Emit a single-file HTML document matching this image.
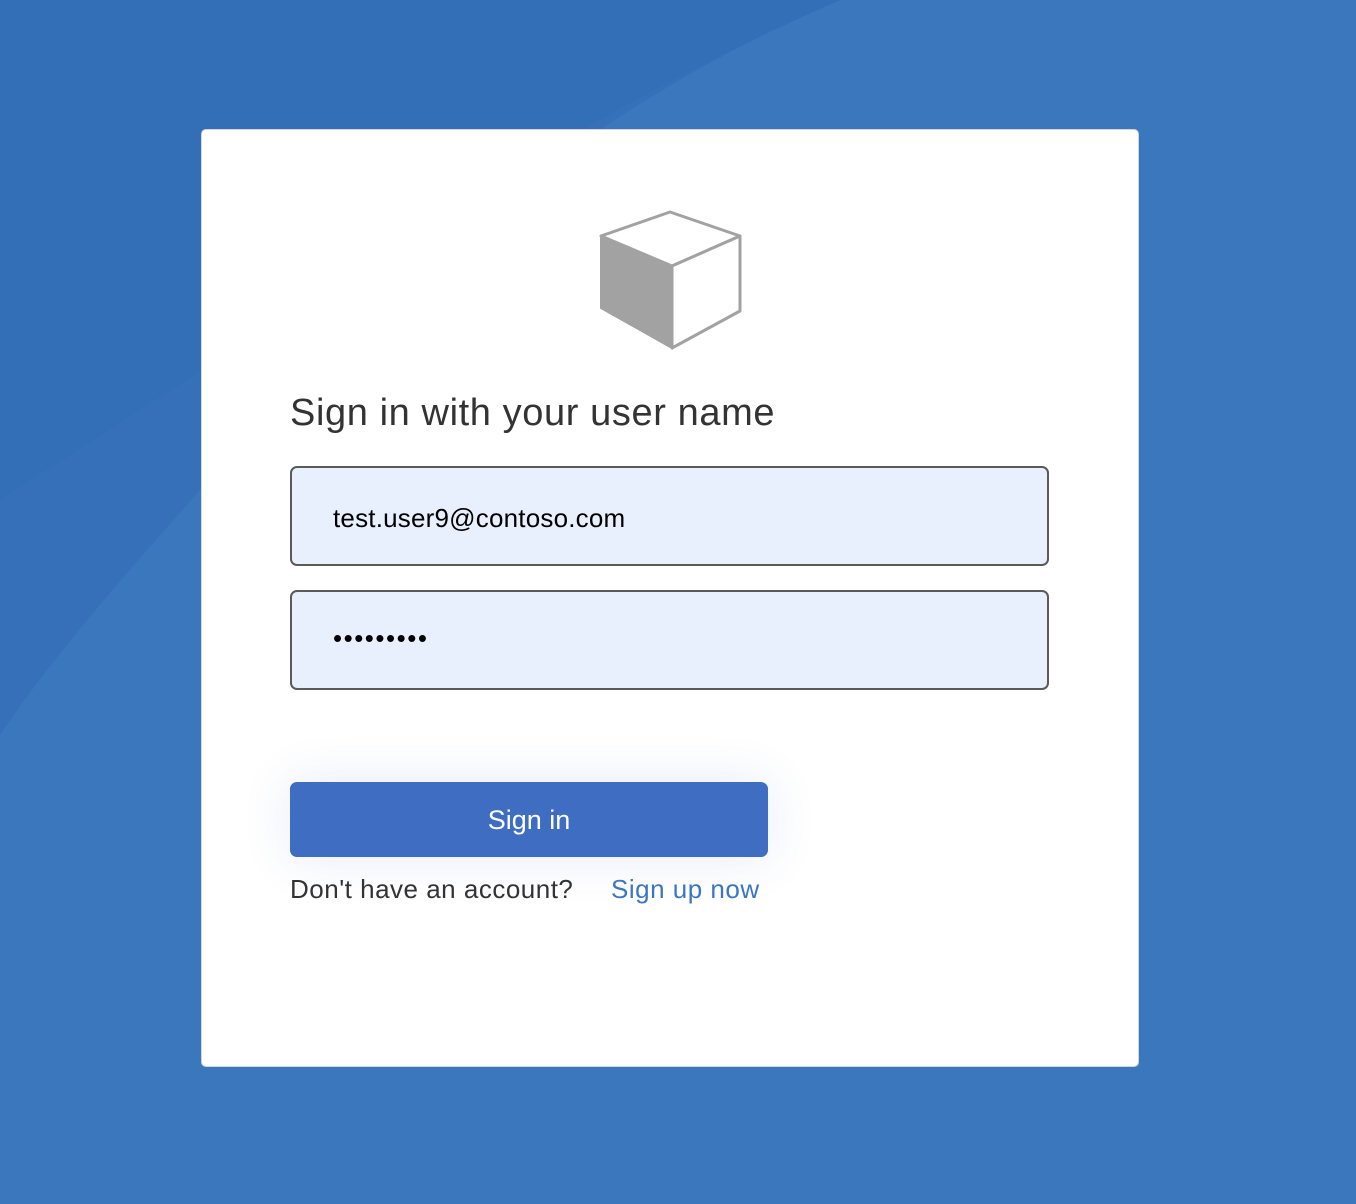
<!DOCTYPE html>
<html><head><meta charset="utf-8"><style>
html,body{margin:0;padding:0;width:1356px;height:1204px;overflow:hidden;font-family:"Liberation Sans",sans-serif}
.bg{position:absolute;left:0;top:0}
.card{position:absolute;left:201px;top:129px;width:936px;height:936px;background:#fff;border:1px solid #d6d6d6;border-radius:5px}
h1{position:absolute;left:290px;top:392px;margin:0;font-weight:normal;font-size:38px;color:#333;white-space:nowrap;letter-spacing:0.6px}
.inp{position:absolute;left:290px;width:759px;height:96px;background:#e8f0fe;border:2px solid #5a5a5a;border-radius:7px;box-sizing:border-box}
.inp span{position:absolute;left:41px;top:35px;font-size:26px;color:#000;letter-spacing:0.2px}
.btn{position:absolute;left:290px;top:782px;width:478px;height:75px;background:#3e6dc2;border-radius:7px;color:#fff;font-size:27px;text-align:center;line-height:77px;box-shadow:0 0 50px rgba(60,90,200,0.12)}
.q{position:absolute;top:874px;font-size:26px;white-space:nowrap;letter-spacing:0.5px}
</style></head><body>
<svg class="bg" width="1356" height="1204">
<rect width="1356" height="1204" fill="#3b77bd"/>
<path d="M0 0 H840 C600 100 380 280 200 490 C120 580 50 660 0 735 Z" fill="#3570b8"/>
<path d="M0 0 H840 C680 70 540 150 420 230 L0 500 Z" fill="#336fb6"/>
</svg>
<div class="card"></div>
<svg style="position:absolute;left:0;top:0" width="1356" height="400">
<polygon points="601,236 670,212 740,236 672,266" fill="#fff" stroke="#a2a2a2" stroke-width="3" stroke-linejoin="round"/>
<polygon points="672,266 740,236 740,311 672,348" fill="#fff" stroke="#a2a2a2" stroke-width="3" stroke-linejoin="round"/>
<polygon points="601,236 672,266 672,348 601,308" fill="#a2a2a2" stroke="#a2a2a2" stroke-width="2"/>
</svg>
<h1>Sign in with your user name</h1>
<div class="inp" style="top:466px;height:100px"><span>test.user9@contoso.com</span></div>
<div class="inp" style="top:590px;height:100px"><span style="top:31px;letter-spacing:1.5px">•••••••••</span></div>
<div class="btn">Sign in</div>
<div class="q" style="left:290px;color:#333">Don't have an account?</div>
<div class="q" style="left:611px;color:#3a77c0">Sign up now</div>
</body></html>
